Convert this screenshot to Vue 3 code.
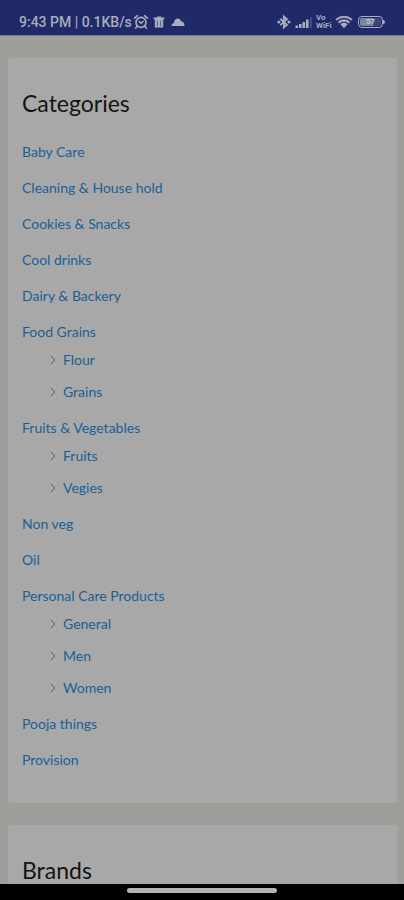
<script setup>
const categories = [
  { name: 'Baby Care' },
  { name: 'Cleaning & House hold' },
  { name: 'Cookies & Snacks' },
  { name: 'Cool drinks' },
  { name: 'Dairy & Backery' },
  { name: 'Food Grains', children: ['Flour', 'Grains'] },
  { name: 'Fruits & Vegetables', children: ['Fruits', 'Vegies'] },
  { name: 'Non veg' },
  { name: 'Oil' },
  { name: 'Personal Care Products', children: ['General', 'Men', 'Women'] },
  { name: 'Pooja things' },
  { name: 'Provision' },
]
</script>

<template>
  <div class="screen">
    <header class="status">
      <div class="side left">
        <span class="clock">9:43 PM | 0.1KB/s</span>
        <svg class="alarm" width="16" height="16" viewBox="0 0 16 16" fill="none" stroke="currentColor">
          <circle cx="8" cy="8.4" r="5" stroke-width="1.6" />
          <path d="M1.6 4.2 4.4 1.7M14.4 4.2 11.6 1.7M4 12.4l-1.4 1.8M12 12.4l1.4 1.8" stroke-width="1.6" stroke-linecap="round" />
          <path d="M5.600 7 8 9.2l2.600-2.200" stroke-width="1.5" />
        </svg>
        <svg class="trash" width="12" height="12" viewBox="0 0 12 12">
          <path d="M.6 1.4H4V.5h4v.9h3.4v1.8H.6zM1.800 3.200h8.400v8.400H1.800z" fill="currentColor" />
          <path d="M4.4 4.6v5.6M7.6 4.6v5.6" class="cut" />
        </svg>
        <svg class="cloud" width="14" height="10" viewBox="0 0 14 10">
          <path d="M.5 9Q.3 6.600 2.800 6 3.600 1.600 6.600 1.500q2.600 0 3.600 2.700Q13.500 5 13.500 9z" fill="currentColor" />
        </svg>
      </div>
      <div class="side right">
        <svg width="14" height="16" viewBox="0 0 14 16" fill="none" stroke="currentColor">
          <path d="M3.2 4.8 10 10.8 6.8 13.6V2.4L10 5.2l-6.8 6" stroke-width="1.8" />
          <circle cx="1.8" cy="8" r="1.5" fill="currentColor" stroke="none" />
          <circle cx="12" cy="8" r="1.5" fill="currentColor" stroke="none" />
        </svg>
        <svg class="signal" width="18" height="14" viewBox="0 0 18 14" fill="currentColor">
          <path d="M.5 10.5h2.6V13H.5zM4 9h2.6v4H4zM7.5 7h2.6v6H7.5zM11 4.5h2.6V13H11z" />
          <path d="M15.400 2h1v11h-1z" opacity=".55" />
        </svg>
        <span class="volte"><span>Vo</span><span>WiFi</span></span>
        <svg class="wifi" width="18" height="14" viewBox="0 0 18 14" fill="none" stroke="currentColor" stroke-width="2">
          <path d="M1 4.8Q9-1.4 17 4.8M3.6 7.6Q9 3.2 14.4 7.6" />
          <path d="M5.4 9.200Q9 6 12.600 9.200L9 13.200z" fill="currentColor" stroke="none" />
        </svg>
        <span class="battery"><span class="level">57</span></span>
      </div>
    </header>

    <main class="content">
      <section class="card">
        <h2>Categories</h2>
        <ul class="list">
          <li v-for="c in categories" :key="c.name">
            <a href="#">{{ c.name }}</a>
            <ul v-if="c.children" class="sub">
              <li v-for="s in c.children" :key="s">
                <svg width="6" height="10" viewBox="0 0 6 10" fill="none" stroke="currentColor">
                  <path d="M.8.8 5 5 .8 9.2" />
                </svg>
                <a href="#">{{ s }}</a>
              </li>
            </ul>
          </li>
        </ul>
      </section>
      <section class="card">
        <h2>Brands</h2>
      </section>
    </main>

    <footer class="nav"><span class="handle"></span></footer>
  </div>
</template>

<style>
body {
  margin: 0;
  background: #000;
}
</style>

<style scoped>
.screen {
  display: flex;
  flex-direction: column;
  height: 100vh;
  overflow: hidden;
  background: #a09e9b;
  font-family: Lato, sans-serif;
}
.status {
  flex: none;
  box-sizing: border-box;
  height: 36px;
  padding: 8px 19px 0;
  display: flex;
  justify-content: space-between;
  align-items: center;
  background: #202a6a;
  border-bottom: 1px solid #77778a;
  color: #a9adbd;
}
.side {
  display: flex;
  align-items: center;
}
.clock {
  font: 500 14px/16px Roboto, sans-serif;
  white-space: nowrap;
}
.alarm {
  margin-left: 1px;
}
.trash {
  margin-left: 4px;
}
.cut {
  stroke: #202a6a;
  stroke-width: 1;
  opacity: 0.6;
}
.cloud {
  margin-left: 6px;
}
.signal {
  margin-left: 4px;
}
.volte {
  display: flex;
  flex-direction: column;
  margin-left: 3px;
  width: 16px;
  font: 700 8px/8px Roboto, sans-serif;
}
.wifi {
  margin-left: 3px;
}
.battery {
  position: relative;
  box-sizing: border-box;
  width: 25px;
  height: 12px;
  margin: 0 2px 0 5px;
  padding: 1px;
  border: 1px solid currentColor;
  border-radius: 4px;
}
.battery::after {
  content: '';
  position: absolute;
  right: -3px;
  top: 3px;
  width: 2px;
  height: 4px;
  border-radius: 0 2px 2px 0;
  background: currentColor;
}
.level {
  display: block;
  border-radius: 2px;
  background: linear-gradient(90deg, #7d83a2 60%, #3c457c 60%);
  color: #c0c3cf;
  font: 700 8px/8px Roboto, sans-serif;
  text-align: center;
}
.content {
  flex: 1;
  min-height: 0;
  overflow: hidden;
  display: flex;
  flex-direction: column;
  gap: 22px;
  padding: 22px 7px 0 8px;
}
.card {
  flex: none;
  padding: 29px 14px 31px;
  border-radius: 2px;
  background: #a8a8a8;
}
h2 {
  margin: 0;
  color: #141414;
  font-size: 23px;
  line-height: 32px;
  font-weight: 400;
}
ul {
  margin: 0;
  padding: 0;
  list-style: none;
}
a {
  color: #1b5f96;
  text-decoration: none;
}
.list {
  display: flex;
  flex-direction: column;
  gap: 12px;
  margin-top: 21px;
  font-size: 14px;
  line-height: 24px;
}
.sub {
  display: flex;
  flex-direction: column;
  gap: 8px;
  margin-top: 4px;
  padding-left: 28px;
}
.sub li {
  display: flex;
  align-items: center;
  gap: 7px;
  color: #5c5c5c;
}
.nav {
  flex: none;
  height: 16px;
  display: flex;
  justify-content: center;
  background: #000;
}
.handle {
  width: 37%;
  height: 5px;
  margin-top: 4px;
  border-radius: 3px;
  background: #b4b4b4;
}
</style>
